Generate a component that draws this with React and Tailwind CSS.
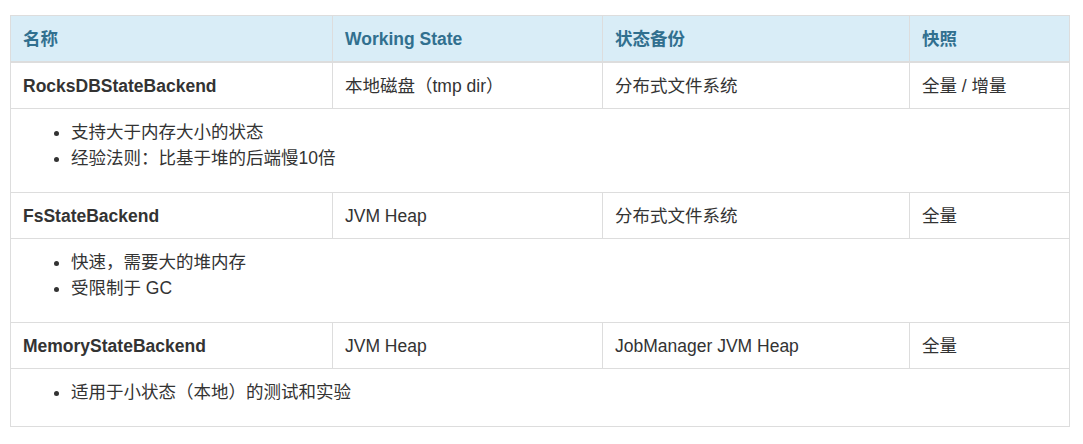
const rows = [
  {
    name: "RocksDBStateBackend",
    working: "本地磁盘（tmp dir）",
    backup: "分布式文件系统",
    snapshot: "全量 / 增量",
    notes: ["支持大于内存大小的状态", "经验法则：比基于堆的后端慢10倍"],
  },
  {
    name: "FsStateBackend",
    working: "JVM Heap",
    backup: "分布式文件系统",
    snapshot: "全量",
    notes: ["快速，需要大的堆内存", "受限制于 GC"],
  },
  {
    name: "MemoryStateBackend",
    working: "JVM Heap",
    backup: "JobManager JVM Heap",
    snapshot: "全量",
    notes: ["适用于小状态（本地）的测试和实验"],
  },
];

const App = () => {
  return (
    <main
      className="min-h-screen bg-white pt-[15px] pl-[10px] text-[#333] text-[17.5px]"
      style={{ fontFamily: '"Liberation Sans", "Noto Sans CJK SC", sans-serif' }}
    >
      <table className="w-[1059px] table-fixed border-collapse border border-[#ddd]">
        <colgroup>
          <col className="w-[322px]" />
          <col className="w-[270px]" />
          <col className="w-[307px]" />
          <col className="w-[160px]" />
        </colgroup>
        <thead className="bg-[#d9edf7] text-[#31708f]">
          <tr>
            <th className="px-3 pt-[13px] pb-[11px] leading-[21px] text-left font-bold border border-[#ddd] border-b-2">名称</th>
            <th className="px-3 pt-[13px] pb-[11px] leading-[21px] text-left font-bold border border-[#ddd] border-b-2">Working State</th>
            <th className="px-3 pt-[13px] pb-[11px] leading-[21px] text-left font-bold border border-[#ddd] border-b-2">状态备份</th>
            <th className="px-3 pt-[13px] pb-[11px] leading-[21px] text-left font-bold border border-[#ddd] border-b-2">快照</th>
          </tr>
        </thead>
        <tbody>
          {rows.map((row) => (
            <>
              <tr key={row.name}>
                <td className="px-3 pt-[13px] pb-[11px] leading-[21px] font-bold border border-[#ddd]">{row.name}</td>
                <td className="px-3 pt-[13px] pb-[11px] leading-[21px] border border-[#ddd]">{row.working}</td>
                <td className="px-3 pt-[13px] pb-[11px] leading-[21px] border border-[#ddd]">{row.backup}</td>
                <td className="px-3 pt-[13px] pb-[11px] leading-[21px] border border-[#ddd]">{row.snapshot}</td>
              </tr>
              <tr key={row.name + "-notes"}>
                <td colSpan="4" className="px-3 pt-[10px] pb-2 border border-[#ddd]">
                  <ul className="list-disc pl-12 mb-[13px] leading-[26px]">
                    {row.notes.map((note) => (
                      <li key={note}>{note}</li>
                    ))}
                  </ul>
                </td>
              </tr>
            </>
          ))}
        </tbody>
      </table>
    </main>
  );
};

export default App;
